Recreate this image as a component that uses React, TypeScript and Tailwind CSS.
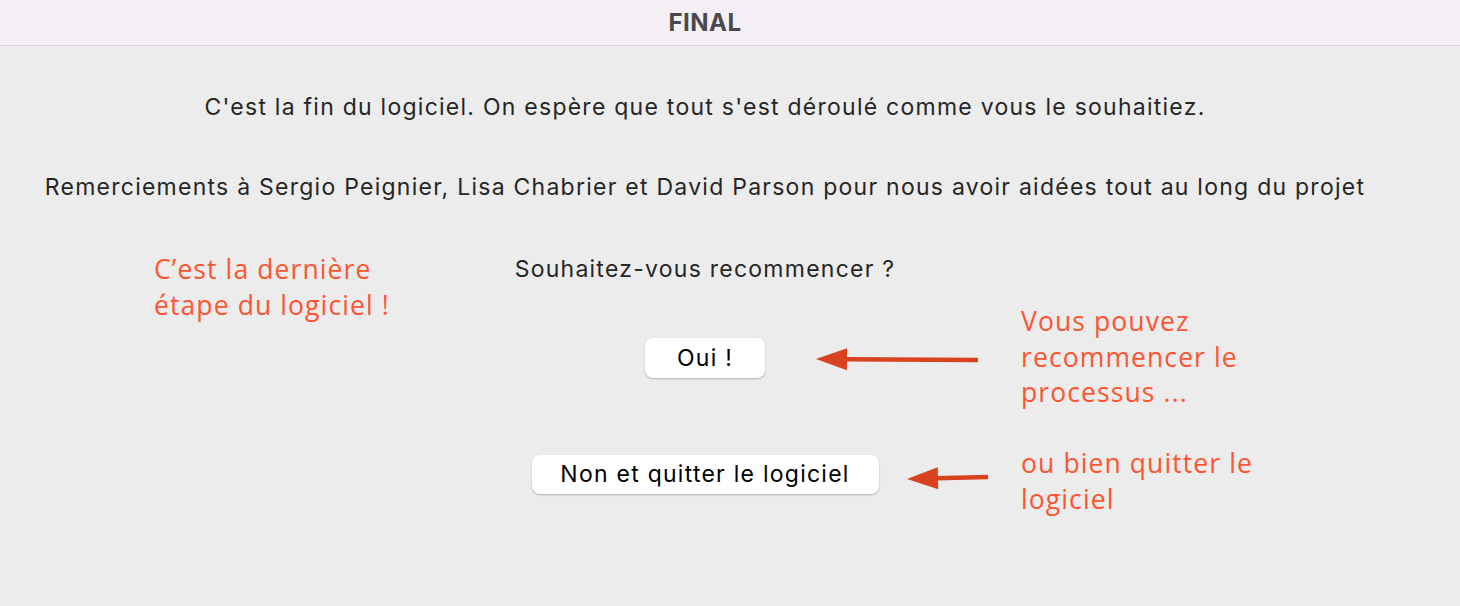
import React from "react";

const sys = { fontFamily: "Inter, 'Liberation Sans', sans-serif" };
const note = { fontFamily: "'Open Sans', Lato, sans-serif" };

function Arrow({ w, h, tip, tail }: { w: number; h: number; tip: [number, number]; tail: [number, number] }) {
  const [tx, ty] = tip;
  const [ex, ey] = tail;
  const hl = 31;
  const hw = 11;
  const dx = ex - tx;
  const dy = ey - ty;
  const len = Math.hypot(dx, dy);
  const ux = dx / len;
  const uy = dy / len;
  const bx = tx + ux * hl;
  const by = ty + uy * hl;
  const px = -uy;
  const py = ux;
  return (
    <svg width={w} height={h} viewBox={`0 0 ${w} ${h}`}>
      <line x1={bx - ux * 2} y1={by - uy * 2} x2={ex} y2={ey} stroke="#d9421f" strokeWidth={4.5} />
      <polygon
        points={`${tx},${ty} ${bx + px * hw},${by + py * hw} ${bx - px * hw},${by - py * hw}`}
        fill="#d9421f"
      />
    </svg>
  );
}

export default function App() {
  return (
    <div className="w-[1460px] h-[606px] bg-[#ececec] overflow-hidden text-[#262626]" style={sys}>
      <div className="h-[46px] bg-[#f3eff5] border-b border-[#d4d1d6] w-full">
        <div className="w-[1410px] h-full flex items-center justify-center">
          <span className="text-[24px] font-bold text-[#4a484c] tracking-[0.5px]">FINAL</span>
        </div>
      </div>
      <div className="w-[1410px] flex flex-col items-center">
        <p className="mt-[47px] text-[23px] leading-[28px] tracking-[1.25px]">
          C'est la fin du logiciel. On espère que tout s'est déroulé comme vous le souhaitiez.
        </p>
        <p className="mt-[52px] text-[23px] leading-[28px] tracking-[1.25px]">
          Remerciements à Sergio Peignier, Lisa Chabrier et David Parson pour nous avoir aidées tout au long du projet
        </p>
        <div className="relative w-full h-[420px]">
          <div className="absolute left-[154px] top-[50px] text-[26.5px] leading-[36px] tracking-[1.1px] text-[#ff5430]" style={note}>
            C’est la dernière
            <br />
            étape du logiciel !
          </div>
          <div className="flex flex-col items-center pt-[54px]">
            <p className="text-[23px] leading-[28px] tracking-[1.25px]">Souhaitez-vous recommencer ?</p>
            <button className="mt-[55px] w-[120px] h-[40px] bg-white rounded-[8px] shadow-[0_1px_2px_rgba(0,0,0,0.25)] text-[23px] tracking-[1.25px] text-black">
              Oui !
            </button>
            <button className="mt-[77px] w-[347px] h-[39px] bg-white rounded-[8px] shadow-[0_1px_2px_rgba(0,0,0,0.25)] text-[23px] tracking-[1.25px] text-black">
              Non et quitter le logiciel
            </button>
          </div>
          <div className="absolute left-[808px] top-[144px]">
            <Arrow w={180} h={30} tip={[8, 14]} tail={[170, 15]} />
          </div>
          <div className="absolute left-[899px] top-[264px]">
            <Arrow w={100} h={30} tip={[8, 14]} tail={[89, 12]} />
          </div>
          <div className="absolute left-[1021px] top-[103px] text-[26.5px] leading-[35.5px] tracking-[1.1px] text-[#ff5430]" style={note}>
            Vous pouvez
            <br />
            recommencer le
            <br />
            processus ...
          </div>
          <div className="absolute left-[1021px] top-[245px] text-[26.5px] leading-[35.5px] tracking-[1.1px] text-[#ff5430]" style={note}>
            ou bien quitter le
            <br />
            logiciel
          </div>
        </div>
      </div>
    </div>
  );
}
